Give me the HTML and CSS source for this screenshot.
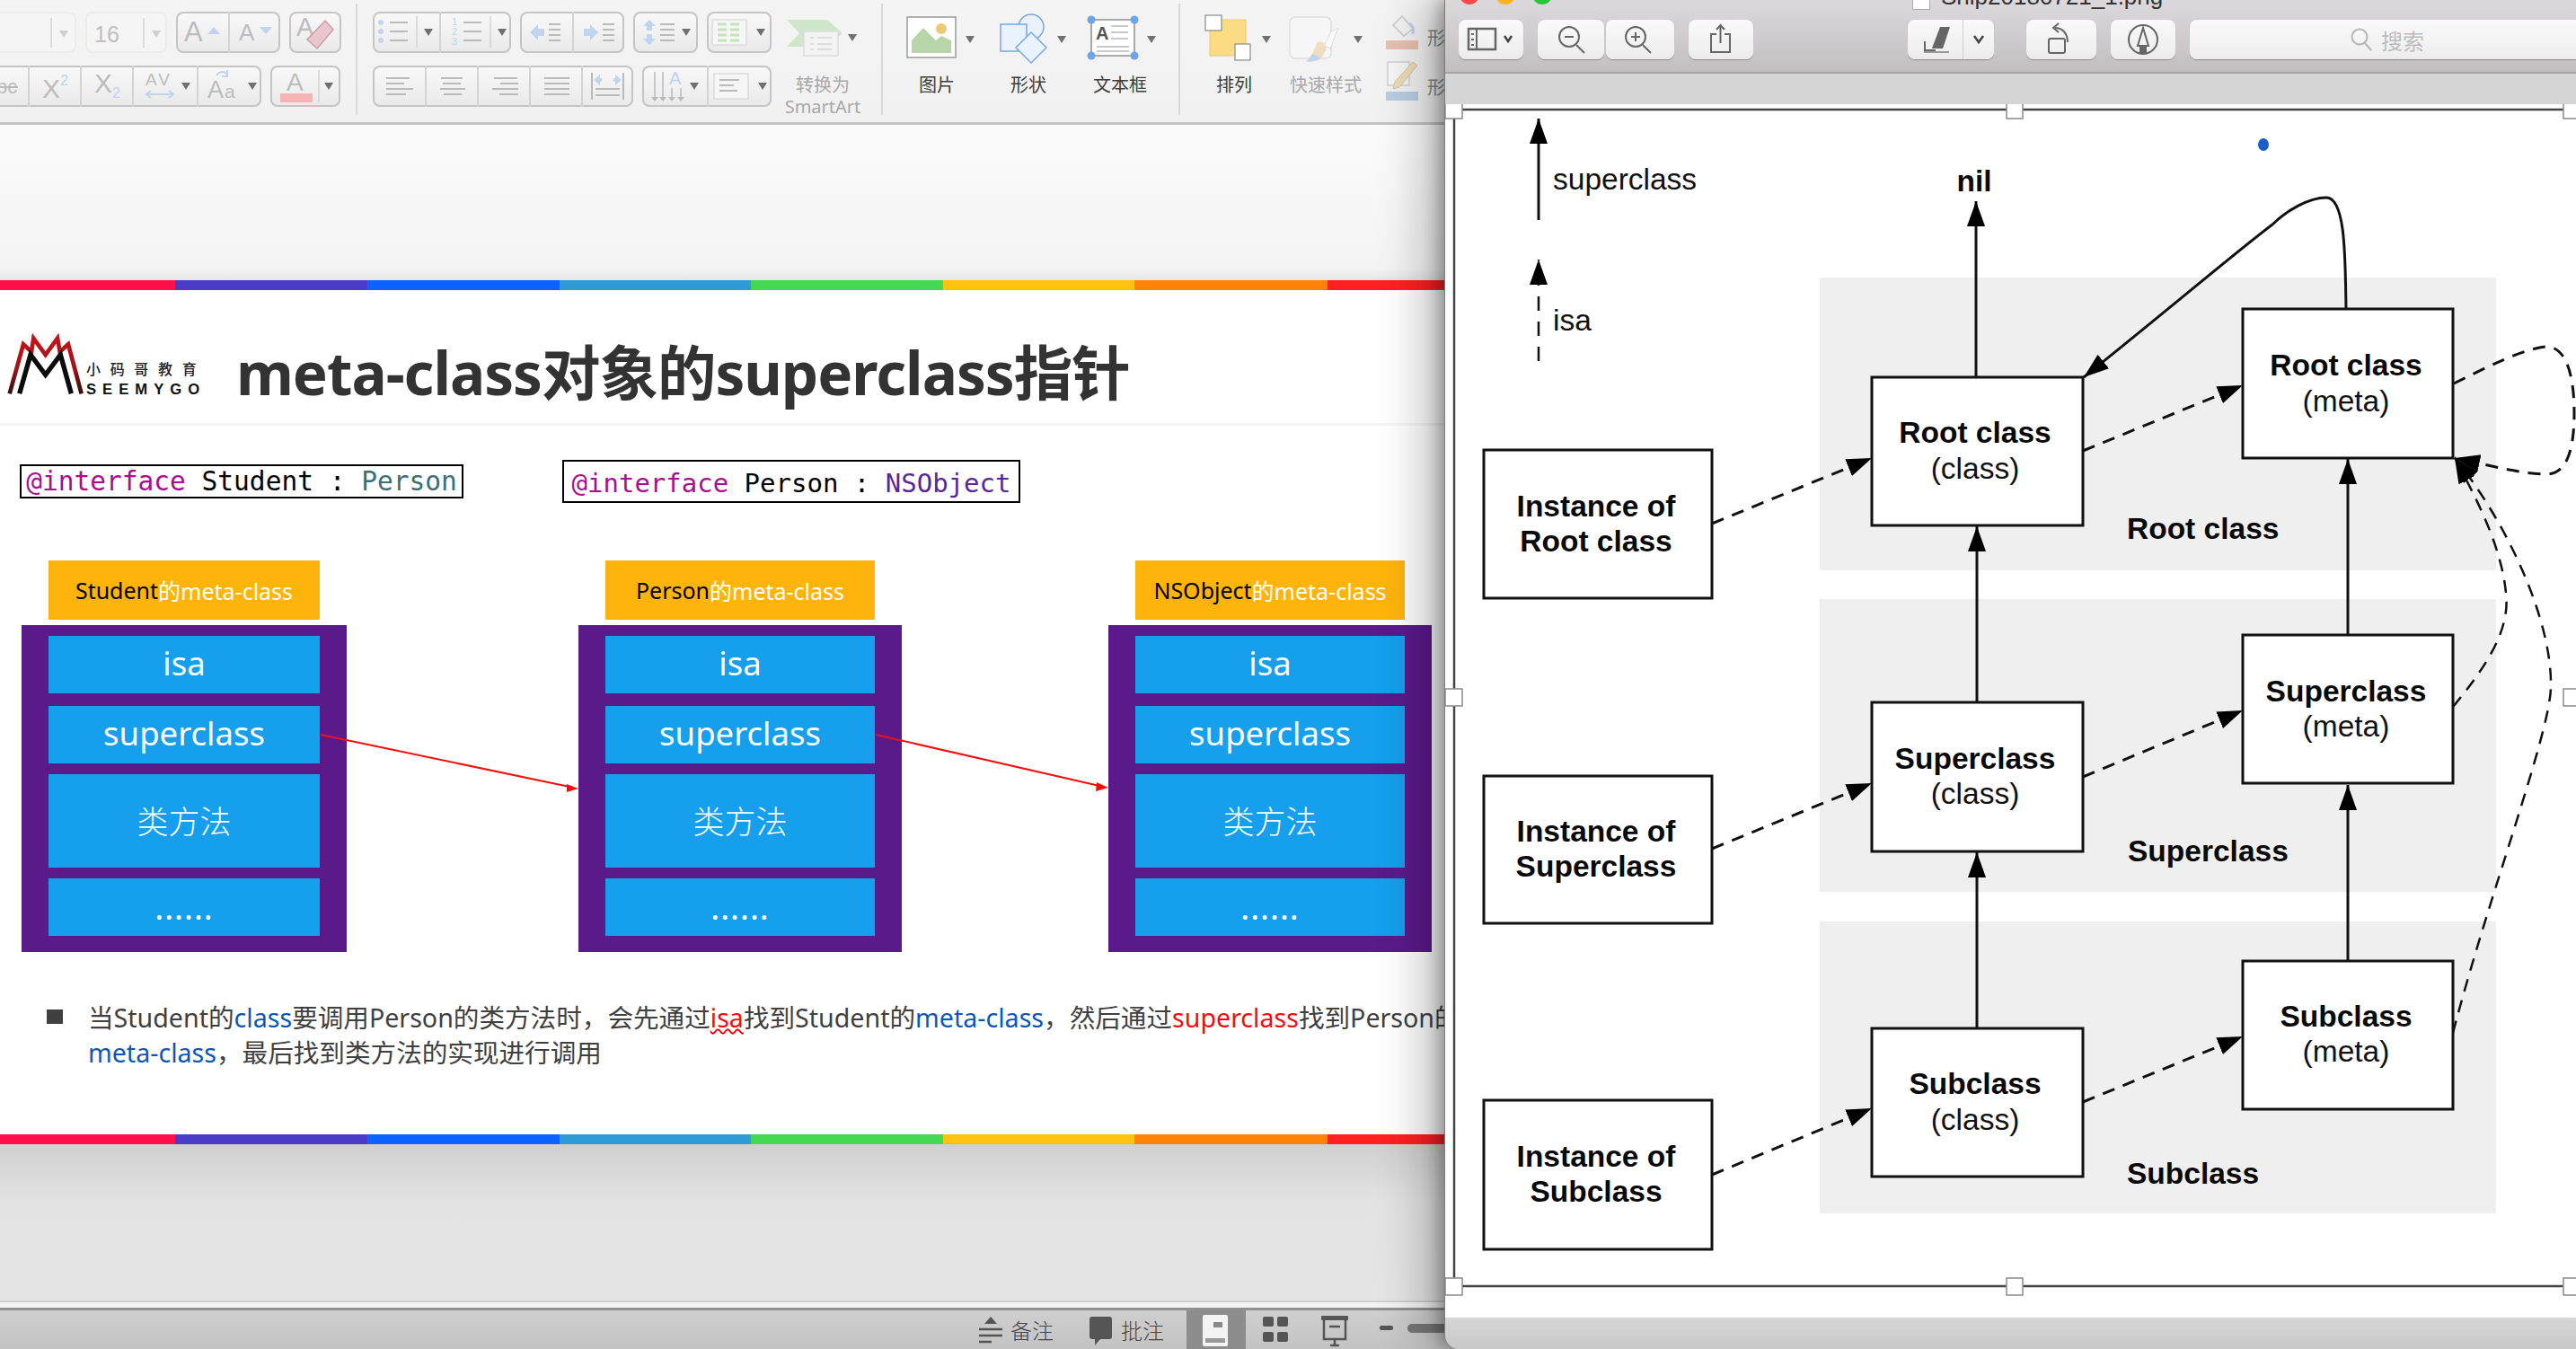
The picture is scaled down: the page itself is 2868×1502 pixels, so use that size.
FILE: index.html
```html
<!DOCTYPE html>
<html lang="zh">
<head>
<meta charset="utf-8">
<title>meta-class</title>
<link rel="stylesheet" href="styles.css">
</head>
<body>
<div class="desktop">
  <main class="ppt">
    <header class="ribbon">
      <section class="rsec font-sec">
        <div class="rrow">
          <div class="combo w85"><svg><line class="sep" x1="57" y1="5" x2="57" y2="38"/><path class="tri-light" d="M66 19h10l-5 8z"/></svg></div>
          <div class="combo w91"><svg><text class="t16" x="8" y="32">16</text><line class="sep" x1="63" y1="5" x2="63" y2="38"/><path class="tri-light" d="M72 19h10l-5 8z"/></svg></div>
          <div class="grp">
            <div class="cell w58"><svg><text class="ga" x="9" y="33" font-size="31">A</text><path class="blue" d="M35 25h14l-7-8z"/></svg></div>
            <div class="cell w58"><svg><text class="ga" x="10" y="32" font-size="26">A</text><path class="blue" d="M33 17h14l-7 8z"/></svg></div>
          </div>
          <div class="grp"><div class="cell w58"><svg><text class="ga" x="8" y="27" font-size="29">A</text><path d="M40 10l9 10-18 21-11-10z" fill="#e9c5cd" stroke="#cd9fab" stroke-width="1.5"/></svg></div></div>
        </div>
        <div class="rrow">
          <div class="grp cutleft">
            <div class="cell w31"><svg><text class="ga" x="-2" y="31" font-size="22">bc</text><line class="ln" x1="0" y1="24" x2="22" y2="24"/></svg></div>
            <div class="cell w58"><svg><text class="ga" x="14" y="36" font-size="30">X</text><text class="bluet" x="34" y="22" font-size="16">2</text></svg></div>
            <div class="cell w58"><svg><text class="ga" x="14" y="30" font-size="30">X</text><text class="bluet" x="34" y="36" font-size="16">2</text></svg></div>
            <div class="cell w72"><svg><text class="ga" x="13" y="22" font-size="19" letter-spacing="3">AV</text><path class="blue-l" d="M14 32h30M19 28l-5 4 5 4M39 28l5 4-5 4"/><path class="tri" d="M53 19h10l-5 8z"/></svg></div>
            <div class="cell w72"><svg><text class="ga" x="10" y="36" font-size="27">A</text><text class="ga" x="29" y="36" font-size="21">a</text><path class="blue-l" d="M20 11c3-5 9-5 12-1M32 5v7h-6"/><path class="tri" d="M55 19h10l-5 8z"/></svg></div>
          </div>
          <div class="grp"><div class="cell w78"><svg><text class="ga" x="18" y="28" font-size="28">A</text><rect x="11" y="31" width="36" height="10" rx="1" fill="#f5b3b3"/><line class="sep" x1="54" y1="5" x2="54" y2="41"/><path class="tri" d="M60 19h10l-5 8z"/></svg></div></div>
        </div>
      </section>
      <div class="rdiv"></div>
      <section class="rsec para-sec">
        <div class="rrow">
          <div class="grp">
            <div class="cell w74"><svg><circle class="dot" cx="9" cy="12" r="3"/><circle class="dot" cx="9" cy="22" r="3"/><circle class="dot" cx="9" cy="32" r="3"/><path class="ln" d="M19 12h20M19 22h20M19 32h20"/><line class="sep" x1="49" y1="5" x2="49" y2="40"/><path class="tri" d="M57 19h10l-5 8z"/></svg></div>
            <div class="cell w80"><svg><text class="bluet" x="12" y="15" font-size="11">1</text><text class="bluet" x="12" y="26" font-size="11">2</text><text class="bluet" x="12" y="37" font-size="11">3</text><path class="ln" d="M25 12h20M25 22h20M25 32h20"/><line class="sep" x1="55" y1="5" x2="55" y2="40"/><path class="tri" d="M63 19h10l-5 8z"/></svg></div>
          </div>
          <div class="grp">
            <div class="cell w58"><svg><path class="blue" d="M11 23l9-9v5h7v8h-7v5z"/><path class="ln" d="M32 14h13M32 20h13M32 26h13M32 32h13"/></svg></div>
            <div class="cell w58"><svg><path class="blue" d="M27 23l-9-9v5h-7v8h7v5z"/><path class="ln" d="M32 14h13M32 20h13M32 26h13M32 32h13"/></svg></div>
          </div>
          <div class="grp"><div class="cell w72"><svg><path class="blue" d="M18 9l7 7h-4v5h-6v-5h-4zM18 37l7-7h-4v-5h-6v5h-4z"/><path class="ln" d="M30 14h16M30 20h16M30 26h16M30 32h16"/><path class="tri" d="M54 19h10l-5 8z"/></svg></div></div>
          <div class="grp"><div class="cell w72"><svg><rect x="6" y="9" width="38" height="28" fill="#f6f6f6" stroke="#cfcfcf"/><path d="M12 14h10M26 14h10M12 20h10M26 20h10M12 26h10M26 26h10M12 32h10M26 32h10" stroke="#c5e3bd" stroke-width="3"/><path class="tri" d="M55 19h10l-5 8z"/></svg></div></div>
        </div>
        <div class="rrow">
          <div class="grp">
            <div class="cell w58"><svg><path class="ln" d="M15 14h26M15 20h20M15 26h30M15 32h22"/></svg></div>
            <div class="cell w58"><svg><path class="ln" d="M16 14h24M18 20h20M15 26h28M19 32h20"/></svg></div>
            <div class="cell w58"><svg><path class="ln" d="M17 14h26M24 20h20M15 26h29M23 32h21"/></svg></div>
            <div class="cell w58"><svg><path class="ln" d="M15 14h28M15 20h28M15 26h28M15 32h28"/></svg></div>
            <div class="cell w58"><svg><path class="ln" d="M10 8v30M45 8v30M14 26h27M14 33h27"/><path class="blue" d="M12 16l7-6v4h2v4h-2v4zM43 16l-7-6v4h-2v4h2v4z"/></svg></div>
          </div>
          <div class="grp">
            <div class="cell w72"><svg><path class="ln thin" d="M14 7v30M23 7v30M33 25v12M43 25v12"/><path class="ln-tri" d="M10 35h8l-4 5zM19 35h8l-4 5zM29 35h8l-4 5zM39 35h8l-4 5z"/><text class="bluet" x="30" y="21" font-size="20">A</text><path class="tri" d="M53 19h10l-5 8z"/></svg></div>
            <div class="cell w72"><svg><rect x="6" y="9" width="38" height="28" fill="#f6f6f6" stroke="#cfcfcf"/><path class="ln" d="M12 16h22M12 22h16M12 28h20"/><path class="tri" d="M55 19h10l-5 8z"/></svg></div>
          </div>
        </div>
      </section>
      <div class="big smart">
        <svg class="bigico"><path d="M10 18h45l17 15-17 15H10l14-15z" fill="#cfe6cb"/><rect x="29" y="31" width="38" height="27" fill="#f3f3f3" stroke="#ddd" stroke-width="1.5"/><path d="M36 38h4M44 38h16M36 45h4M44 45h16M36 51h4M44 51h16" stroke="#dcdcdc" stroke-width="2"/><path class="tri" d="M78 34h10l-5 8z"/></svg>
        <span class="blabel off">转换为</span>
        <span class="blabel off">SmartArt</span>
      </div>
      <div class="rdiv"></div>
      <div class="big">
        <svg class="bigico"><rect x="17" y="15" width="54" height="45" fill="#fff" stroke="#9a9a9a" stroke-width="1.5"/><path d="M22 55V41l13-14 14 14 6-5 11 5v14z" fill="#b8d4a9"/><ellipse cx="55" cy="28" rx="6" ry="6" fill="#edc973"/><path class="tri" d="M82 36h10l-5 8z"/></svg>
        <span class="blabel">图片</span>
      </div>
      <div class="big">
        <svg class="bigico"><circle cx="53" cy="26" r="14" fill="#e9f2fd" stroke="#7aa7e6" stroke-width="1.5"/><rect x="19" y="23" width="29" height="30" fill="#e9f2fd" stroke="#7aa7e6" stroke-width="1.5"/><path d="M53 32l17 17-17 17-17-17z" fill="#eaf3fd" stroke="#7aa7e6" stroke-width="1.5"/><path class="tri" d="M82 36h10l-5 8z"/></svg>
        <span class="blabel">形状</span>
      </div>
      <div class="big">
        <svg class="bigico"><rect x="18" y="18" width="48" height="40" fill="#fff" stroke="#8f8f8f" stroke-width="1.5"/><circle class="hnd" cx="18" cy="18" r="4.5"/><circle class="hnd" cx="66" cy="18" r="4.5"/><circle class="hnd" cx="18" cy="58" r="4.5"/><circle class="hnd" cx="66" cy="58" r="4.5"/><text class="tba" x="23" y="40" font-size="20">A</text><path d="M40 25h19M40 32h19M40 39h19M24 48h36M24 53h36" stroke="#c9c9c9" stroke-width="2"/><path class="tri" d="M80 36h10l-5 8z"/></svg>
        <span class="blabel">文本框</span>
      </div>
      <div class="rdiv"></div>
      <div class="big">
        <svg class="bigico"><rect x="23" y="18" width="40" height="40" fill="#fbdc84" stroke="#e8c96c"/><rect x="18" y="13" width="18" height="17" fill="#fff" stroke="#8a8a8a" stroke-width="1.2"/><rect x="51" y="45" width="17" height="18" fill="#fff" stroke="#8a8a8a" stroke-width="1.2"/><path class="tri" d="M81 36h10l-5 8z"/></svg>
        <span class="blabel">排列</span>
      </div>
      <div class="big">
        <svg class="bigico"><rect x="10" y="15" width="46" height="46" rx="6" fill="#f6f6f6" stroke="#dedede" stroke-width="1.5"/><path d="M56 31l8-4-9 23-7-3z" fill="#fafafa" stroke="#dcdcdc"/><path d="M40 44c5-4 12 0 10 8l-5 9c-5 3-13 4-17 3 5-3 10-12 12-20z" fill="#f0dcc2"/><path d="M45 61c-5 3-13 4-17 3 2-1 5-4 7-8z" fill="#bcd3f0"/><path class="tri" d="M81 36h10l-5 8z"/></svg>
        <span class="blabel off">快速样式</span>
      </div>
      <div class="stylecol">
        <div class="stylerow">
          <svg class="styleico"><path d="M8 16l10-10 12 14-10 8z" fill="#f3f3f3" stroke="#c8c8c8" stroke-width="1.5"/><path d="M26 14c4 2 5 7 4 12" fill="none" stroke="#bfd2ec" stroke-width="3"/><rect x="0" y="33" width="36" height="10" fill="#e8c1b0"/></svg>
          <span class="stext">形</span>
        </div>
        <div class="stylerow">
          <svg class="styleico"><rect x="2" y="2" width="24" height="26" fill="#f6f6f6" stroke="#d0d0d0" stroke-width="1.5"/><path d="M30 2l5 4-20 24-7 2 2-8z" fill="#ecdcb8" stroke="#d4c49d"/><rect x="0" y="35" width="36" height="10" fill="#b9cde3"/></svg>
          <span class="stext">形</span>
        </div>
      </div>
    </header>

    <div class="workspace">
      <div class="slide">
        <div class="rainbow">
          <i class="s1"></i><i class="s2"></i><i class="s3"></i><i class="s4"></i><i class="s5"></i><i class="s6"></i><i class="s7"></i><i class="s8"></i>
        </div>
        <div class="slide-head">
          <svg class="logo" viewBox="0 0 780 300">
            <defs><linearGradient id="redfade" x1="0" y1="0" x2="0" y2="1"><stop offset="0" stop-color="#c4131a"/><stop offset=".55" stop-color="#a01216"/><stop offset="1" stop-color="#301010"/></linearGradient></defs>
            <polyline points="32,235 78,70 105,95 112,50 152,105 192,50 200,95 228,70 272,235" fill="none" stroke="url(#redfade)" stroke-width="14"/>
            <polyline points="65,235 102,105 152,172 202,105 238,235" fill="none" stroke="#0c0c0c" stroke-width="16"/>
            <text class="logo-cn" x="288" y="170">小码哥教育</text>
            <text class="logo-en" x="288" y="237">SEEMYGO</text>
          </svg>
          <h1 class="slide-title">meta-class对象的superclass指针</h1>
        </div>
        <div class="code-row">
          <div class="code c1"><span class="kw">@interface</span> Student : <span class="ty1">Person</span></div>
          <div class="code c2"><span class="kw">@interface</span> Person : <span class="ty2">NSObject</span></div>
        </div>
        <div class="cols">
          <div class="col">
            <div class="col-head">Student<span class="wh">的meta-class</span></div>
            <div class="stack"><div class="row">isa</div><div class="row">superclass</div><div class="row tall cn">类方法</div><div class="row dots">......</div></div>
          </div>
          <div class="col narrow gap-b">
            <div class="col-head">Person<span class="wh">的meta-class</span></div>
            <div class="stack"><div class="row">isa</div><div class="row">superclass</div><div class="row tall cn">类方法</div><div class="row dots">......</div></div>
          </div>
          <div class="col narrow gap-c">
            <div class="col-head">NSObject<span class="wh">的meta-class</span></div>
            <div class="stack"><div class="row">isa</div><div class="row">superclass</div><div class="row tall cn">类方法</div><div class="row dots">......</div></div>
          </div>
        </div>
        <div class="note">
          <span class="sq"></span>
          <p>当Student的<span class="b">class</span>要调用Person的类方法时，会先通过<span class="r sq-under">isa</span>找到Student的<span class="b">meta-class</span>，然后通过<span class="r">superclass</span>找到Person的<br><span class="b">meta-class</span>，最后找到类方法的实现进行调用</p>
        </div>
        <div class="rainbow bottom">
          <i class="s1"></i><i class="s2"></i><i class="s3"></i><i class="s4"></i><i class="s5"></i><i class="s6"></i><i class="s7"></i><i class="s8"></i>
        </div>
        <svg class="slide-arrows" viewBox="0 312 1608 962">
          <path d="M357 818L634 876M975 818L1224 875" stroke="#f40f0f" stroke-width="2" fill="none"/>
          <path d="M644 878l-13-5v9zM1234 877l-13-6-1 10z" fill="#f40f0f"/>
        </svg>
      </div>
      <div class="hsplit"></div>
    </div>

    <footer class="status">
      <span class="st-item">
        <svg class="st-ico"><path d="M14 2l7 8H7z" fill="#555"/><path d="M1 16h26M1 23h26M1 30h14" stroke="#555" stroke-width="2.5"/></svg>备注
      </span>
      <span class="st-item">
        <svg class="st-ico"><path d="M4 2h19a3 3 0 0 1 3 3v19a3 3 0 0 1-3 3H13l-6 7v-7H4a3 3 0 0 1-3-3V5a3 3 0 0 1 3-3z" fill="#555"/></svg>批注
      </span>
      <span class="st-view on"><svg class="v-ico"><rect x="0" y="1" width="28" height="35" rx="2" fill="#f4f4f4"/><rect x="12" y="9" width="10" height="6" fill="#888"/><rect x="3" y="27" width="22" height="5" fill="#999"/></svg></span>
      <span class="st-view"><svg class="v-ico"><rect x="1" y="3" width="12" height="11" rx="2" fill="#555"/><rect x="17" y="3" width="12" height="11" rx="2" fill="#555"/><rect x="1" y="20" width="12" height="11" rx="2" fill="#555"/><rect x="17" y="20" width="12" height="11" rx="2" fill="#555"/></svg></span>
      <span class="st-view"><svg class="v-ico"><rect x="0" y="2" width="30" height="5" rx="1" fill="#555"/><rect x="3" y="5" width="24" height="23" fill="none" stroke="#555" stroke-width="2.5"/><path d="M9 14h12M15 28v6M10 35h10" stroke="#555" stroke-width="2.5"/></svg></span>
      <span class="st-minus"></span>
      <span class="st-slider"></span>
    </footer>
  </main>

  <aside class="preview">
    <div class="pv-bar">
      <div class="pv-btn w72"><svg><rect x="11" y="10" width="30" height="23" fill="none" stroke="#666" stroke-width="2.5"/><path d="M20 10v23" stroke="#666" stroke-width="2"/><path d="M14 16h3M14 22h3M14 28h3" stroke="#666" stroke-width="2"/><path d="M51 18l4 6 4-6" fill="none" stroke="#444" stroke-width="2.5"/></svg></div>
      <div class="pv-btn w74 g16"><svg><circle cx="35" cy="19" r="11" fill="none" stroke="#666" stroke-width="2"/><path d="M30 19h10M43 28l9 9" stroke="#666" stroke-width="2"/></svg></div>
      <div class="pv-btn w76 g2"><svg><circle cx="33" cy="19" r="11" fill="none" stroke="#666" stroke-width="2"/><path d="M28 19h10M33 14v10M41 28l9 9" stroke="#666" stroke-width="2"/></svg></div>
      <div class="pv-btn w72 g16"><svg><path d="M31 16h-6v20h21V16h-6M35.500 26V7M31 11l4.500-5 4.500 5" fill="none" stroke="#666" stroke-width="2"/></svg></div>
      <div class="pv-split g172">
        <div class="pv-btn inner w61"><svg><path d="M28 29l8-21h11l-8 24H27z" fill="#666"/><path d="M18 36h28" stroke="#999" stroke-width="2"/><path d="M19 24v10h12" fill="none" stroke="#666" stroke-width="2"/></svg></div>
        <div class="pv-btn inner w35"><svg><path d="M12 18l5 7 5-7" fill="none" stroke="#444" stroke-width="2.5"/></svg></div>
      </div>
      <div class="pv-btn w78 g36"><svg><rect x="25" y="21" width="18" height="16" rx="2" fill="none" stroke="#666" stroke-width="2"/><path d="M32 9c8 0 14 6 14 16M36 4l-6 5 6 5" fill="none" stroke="#666" stroke-width="2"/></svg></div>
      <div class="pv-btn w72 g16"><svg><circle cx="36" cy="22" r="16" fill="none" stroke="#666" stroke-width="2"/><path d="M36 9l-6 20h12z" fill="none" stroke="#666" stroke-width="2"/><rect x="32" y="28" width="8" height="9" fill="#666"/></svg></div>
      <div class="pv-search g16">
        <svg class="lens"><circle cx="10" cy="10" r="8.500" fill="none" stroke="#b5b5b5" stroke-width="2"/><path d="M16 17l7 8" stroke="#b5b5b5" stroke-width="2"/></svg>
        <span>搜索</span>
      </div>
    </div>
    <div class="pv-title"><span class="pv-fileicon"></span>Snip20180721_1.png</div>
    <span class="light red"></span><span class="light amber"></span><span class="light green"></span>
    <div class="pv-band"></div>
    <div class="pv-canvas">
      <svg class="diagram" viewBox="1609 116 1260 1351">
        <defs>
          <marker id="ah" markerUnits="userSpaceOnUse" markerWidth="30" markerHeight="22" refX="28" refY="10" orient="auto"><path d="M0 0L28 10 0 20z"/></marker>
        </defs>
        <rect class="band" x="2026" y="309" width="753" height="326"/>
        <rect class="band" x="2026" y="667" width="753" height="326"/>
        <rect class="band" x="2026" y="1026" width="753" height="325"/>

        <rect class="frame" x="1619" y="122" width="1300" height="1310"/>

        <path class="solid" d="M1713 245V132" marker-end="url(#ah)"/>
        <path class="dash legend" d="M1713 402V289" marker-end="url(#ah)"/>
        <text class="rg" x="1729" y="211">superclass</text>
        <text class="rg" x="1729" y="368">isa</text>
        <text class="bd mid" x="2198" y="213">nil</text>
        <ellipse cx="2520" cy="161" rx="6" ry="7" fill="#1a5fc8"/>

        <path class="solid" d="M2200 420V224" marker-end="url(#ah)"/>
        <path class="solid" d="M2201 782V586" marker-end="url(#ah)"/>
        <path class="solid" d="M2201 1145V949" marker-end="url(#ah)"/>
        <path class="solid" d="M2614 707V511" marker-end="url(#ah)"/>
        <path class="solid" d="M2614 1070V874" marker-end="url(#ah)"/>
        <path class="solid" d="M2612 344C2611 290 2612 220 2590 220C2570 220 2545 235 2530 250C2490 280 2420 340 2320 420" marker-end="url(#ah)"/>

        <path class="dash" d="M1906 583L2084 510" marker-end="url(#ah)"/>
        <path class="dash" d="M2319 502L2497 429" marker-end="url(#ah)"/>
        <path class="dash" d="M1906 945L2084 872" marker-end="url(#ah)"/>
        <path class="dash" d="M2319 865L2497 791" marker-end="url(#ah)"/>
        <path class="dash" d="M1906 1308L2084 1234" marker-end="url(#ah)"/>
        <path class="dash" d="M2319 1227L2497 1154" marker-end="url(#ah)"/>
        <path class="dash" d="M2732 427C2770 408 2810 388 2835 386C2858 386 2866 420 2866 460C2866 500 2858 528 2835 528C2810 528 2770 518 2733 510" marker-end="url(#ah)"/>
        <path class="dash thin" d="M2731 787C2770 740 2795 700 2790 660C2785 610 2760 560 2733 510" marker-end="url(#ah)"/>
        <path class="dash thin" d="M2731 1150C2770 1000 2838 820 2840 766C2842 690 2790 580 2733 510" marker-end="url(#ah)"/>

        <rect class="box" x="1652" y="501" width="254" height="165"/>
        <rect class="box" x="2084" y="420" width="235" height="165"/>
        <rect class="box" x="2497" y="344" width="234" height="166"/>
        <rect class="box" x="1652" y="864" width="254" height="164"/>
        <rect class="box" x="2084" y="782" width="235" height="166"/>
        <rect class="box" x="2497" y="707" width="234" height="165"/>
        <rect class="box" x="1652" y="1225" width="254" height="166"/>
        <rect class="box" x="2084" y="1145" width="235" height="165"/>
        <rect class="box" x="2497" y="1070" width="234" height="165"/>

        <text class="bd mid" x="1777" y="575">Instance of</text><text class="bd mid" x="1777" y="614">Root class</text>
        <text class="bd mid" x="2199" y="493">Root class</text><text class="rg mid" x="2199" y="533">(class)</text>
        <text class="bd mid" x="2612" y="418">Root class</text><text class="rg mid" x="2612" y="458">(meta)</text>
        <text class="bd" x="2368" y="600">Root class</text>

        <text class="bd mid" x="1777" y="937">Instance of</text><text class="bd mid" x="1777" y="976">Superclass</text>
        <text class="bd mid" x="2199" y="856">Superclass</text><text class="rg mid" x="2199" y="895">(class)</text>
        <text class="bd mid" x="2612" y="781">Superclass</text><text class="rg mid" x="2612" y="820">(meta)</text>
        <text class="bd" x="2369" y="959">Superclass</text>

        <text class="bd mid" x="1777" y="1299">Instance of</text><text class="bd mid" x="1777" y="1338">Subclass</text>
        <text class="bd mid" x="2199" y="1218">Subclass</text><text class="rg mid" x="2199" y="1258">(class)</text>
        <text class="bd mid" x="2612" y="1143">Subclass</text><text class="rg mid" x="2612" y="1182">(meta)</text>
        <text class="bd" x="2368" y="1318">Subclass</text>

        <rect class="handle" x="1609" y="112" width="19" height="20"/>
        <rect class="handle" x="2234" y="112" width="18" height="20"/>
        <rect class="handle" x="2854" y="112" width="19" height="20"/>
        <rect class="handle" x="1609" y="767" width="19" height="19"/>
        <rect class="handle" x="2854" y="767" width="19" height="19"/>
        <rect class="handle" x="1609" y="1423" width="19" height="19"/>
        <rect class="handle" x="2234" y="1423" width="18" height="19"/>
        <rect class="handle" x="2854" y="1423" width="19" height="19"/>
      </svg>
    </div>
    <div class="pv-foot"></div>
  </aside>
</div>
</body>
</html>
```
FILE: styles.css
```css
* { box-sizing: border-box; }
html, body { margin: 0; padding: 0; }
body { width: 2868px; height: 1502px; overflow: hidden; background: #ddd; font-family: "Noto Sans", "Noto Sans CJK SC", sans-serif; }
.desktop { position: relative; width: 2868px; height: 1502px; overflow: hidden; }

/* PowerPoint window */
.ppt { width: 1620px; height: 1502px; display: flex; flex-direction: column; }
.ribbon { height: 139px; flex: none; display: flex; align-items: flex-start; background: linear-gradient(#f4f4f4, #f1f1f1); border-bottom: 3px solid #c4c4c4; }
.rsec { display: flex; flex-direction: column; gap: 14px; padding-top: 13px; }
.font-sec { width: 379px; }
.para-sec { width: 444px; }
.rrow { display: flex; gap: 10px; height: 46px; }
.rdiv { width: 2px; height: 124px; margin: 4px 15px 0; background: #d9d9d9; flex: none; }
.font-sec + .rdiv { margin: 4px 17px 0 17px; }
.combo { height: 46px; border: 2px solid #ececec; border-radius: 8px; background: #f5f5f5; flex: none; }
.combo.w85 { border-left: 0; border-radius: 0 8px 8px 0; width: 85px; }
.combo.w91 { width: 91px; }
.combo svg, .cell svg, .pv-btn svg { display: block; width: 100%; height: 100%; overflow: visible; }
.grp { height: 46px; display: flex; border-radius: 8px; background: linear-gradient(#f9f9f9, #e9e9e9); box-shadow: inset 0 0 0 2px #c5c5c5; flex: none; }
.grp.cutleft { margin-left: -2px; border-radius: 0 8px 8px 0; }
.cell { height: 100%; flex: none; border-left: 2px solid #d3d3d3; overflow: hidden; }
.cell:first-child { border-left: 0; }
.w31 { width: 33px; } .w58 { width: 58px; } .w72 { width: 72px; } .w74 { width: 74px; } .w76 { width: 76px; } .w78 { width: 78px; } .w80 { width: 80px; }
.w35 { width: 35px; } .w61 { width: 61px; }
.ga { fill: #bcbcbc; font-family: "Liberation Sans", sans-serif; }
.bluet { fill: #c0d3ec; font-family: "Liberation Sans", sans-serif; }
.t16 { fill: #bfbfbf; font-family: "Liberation Sans", sans-serif; font-size: 25px; }
.tba { fill: #555; font-family: "Liberation Sans", sans-serif; font-weight: 700; }
.blue { fill: #c0d4ee; }
.blue-l { fill: none; stroke: #c0d4ee; stroke-width: 2; }
.dot { fill: #c3d5ed; }
.hnd { fill: #6fa3ea; }
.ln { fill: none; stroke: #bababa; stroke-width: 2; }
.ln.thin { stroke-width: 1.5; }
.ln-tri { fill: #bababa; }
.sep { stroke: #d3d3d3; stroke-width: 1.5; }
.tri { fill: #707070; }
.tri-light { fill: #cfcfcf; }
.big { width: 100px; flex: none; display: flex; flex-direction: column; align-items: center; padding-top: 4px; }
.bigico { width: 100px; height: 79px; display: block; overflow: visible; flex: none; }
.smart { margin: 0 0 0 7px; }
.rdiv + .big { margin-left: -5px; }
.big + .big { margin-left: 2px; }
.blabel { font-size: 20px; line-height: 24px; color: #3e3e3e; white-space: nowrap; }
.blabel.off { color: #a8a8a8; }
.stylecol { display: flex; flex-direction: column; gap: 5px; padding: 8px 0 0 17px; }
.stylerow { display: flex; gap: 10px; height: 50px; align-items: flex-end; }
.styleico { width: 36px; height: 46px; display: block; flex: none; }
.stext { font-size: 20px; color: #888; line-height: 30px; }

.workspace { flex: 1; display: flex; flex-direction: column; padding-top: 173px; background: linear-gradient(#fbfbfb 0, #f4f4f4 160px, #e6e6e6 173px, #d0d0d0 1135px, #e3e3e3 1200px, #e5e5e5 100%); min-height: 0; }
.slide { position: relative; height: 962px; flex: none; display: flex; flex-direction: column; background: #fff; overflow: hidden; }
.rainbow { height: 11px; flex: none; display: flex; }
.rainbow i { display: block; height: 100%; flex: none; width: 214px; }
.rainbow .s1 { width: 195px; background: #ff1049; }
.rainbow .s2 { background: #4a3bc9; }
.rainbow .s3 { background: #0c62ff; }
.rainbow .s4 { background: #2f9bd6; width: 213px; }
.rainbow .s5 { background: #45d853; }
.rainbow .s6 { background: #ffc20e; width: 213px; }
.rainbow .s7 { background: #ff8209; width: 215px; }
.rainbow .s8 { background: #ff2020; width: 143px; }
.rainbow.bottom { margin-top: auto; }
.slide-head { height: 151px; flex: none; display: flex; align-items: flex-start; padding-top: 37px; border-bottom: 3px solid #f6f6f6; }
.logo { width: 260px; height: 100px; flex: none; display: block; }
.logo-cn { font-family: "Noto Sans CJK SC", sans-serif; font-size: 48px; font-weight: 500; letter-spacing: 32px; fill: #222; }
.logo-en { font-family: "Liberation Sans", sans-serif; font-weight: 700; font-size: 50px; letter-spacing: 21px; fill: #111; }
.slide-title { margin: 8px 0 0 3px; font-size: 65.5px; line-height: 94px; font-weight: 700; color: #333; white-space: nowrap; letter-spacing: -1px; }
.code-row { display: flex; align-items: center; gap: 110px; margin-top: 38px; padding-left: 22px; height: 48px; flex: none; }
.code { border: 2px solid #000; font-family: "DejaVu Sans Mono", monospace; color: #000; white-space: nowrap; display: block; text-align: center; font-size: 29.5px; }
.code.c1 { width: 494px; height: 38px; line-height: 34px; }
.code.c2 { width: 510px; height: 48px; line-height: 48px; font-size: 29px; }
.kw { color: #aa0d91; }
.ty1 { color: #3f6e74; }
.ty2 { color: #5c2699; }
.cols { display: flex; margin: 64px 0 0 24px; flex: none; }
.col { width: 362px; display: flex; flex-direction: column; gap: 6px; flex: none; }
.col.narrow { width: 360px; }
.gap-b { margin-left: 258px; }
.gap-c { margin-left: 230px; }
.col-head { height: 66px; margin: 0 30px; background: #ffb40b; color: #000; display: flex; align-items: center; justify-content: center; font-size: 25px; white-space: pre; }
.wh { color: #fff; }
.stack { background: #5a1a8a; padding: 12px 30px 18px; display: flex; flex-direction: column; gap: 12px; }
.row { height: 64px; background: #159fec; color: #fff; display: flex; align-items: center; justify-content: center; font-size: 36.500px; line-height: 60px; padding-bottom: 4px; flex: none; }
.row:nth-child(2) { margin-top: 2px; }
.row.tall { height: 104px; font-size: 35px; line-height: 1.4; }
.row.cn { font-family: "Noto Sans CJK SC", sans-serif; font-weight: 300; }
.row.dots { font-size: 37px; letter-spacing: 1px; align-items: flex-end; line-height: 37px; padding-bottom: 14px; }
.note { display: flex; align-items: flex-start; padding-left: 52px; margin-top: 53px; flex: none; }
.sq { width: 18px; height: 16px; margin-top: 11px; background: #404040; flex: none; }
.note p { margin: 0 0 0 28px; font-size: 28.600px; line-height: 39px; color: #404040; white-space: nowrap; }
.b { color: #0b57b8; }
.r { color: #f50d0d; }
.sq-under { text-decoration: #e00 wavy underline 2px; }
.slide-arrows { position: absolute; left: 0; top: 0; width: 1608px; height: 962px; pointer-events: none; }
.hsplit { margin-top: auto; height: 11px; flex: none; background: #f3f3f3; border-top: 2px solid #cfcfcf; border-bottom: 3px solid #909090; }

.status { height: 43px; flex: none; display: flex; align-items: stretch; padding-left: 1089px; background: linear-gradient(#cfcfcf, #c3c3c3); color: #444; font-size: 24px; }
.st-item { display: flex; align-items: center; gap: 9px; margin-right: 39px; font-family: "Noto Sans CJK SC", sans-serif; font-weight: 300; line-height: 1; white-space: nowrap; }
.st-item + .st-item { margin-right: 25px; }
.st-ico { width: 27px; height: 34px; display: block; flex: none; overflow: visible; }
.st-view { width: 74px; display: flex; align-items: center; justify-content: center; }
.st-view.on { background: #8d8d8d; }
.v-ico { width: 30px; height: 36px; display: block; overflow: visible; }
.st-minus { width: 16px; height: 5px; margin: 17px 16px 0 18px; background: #555; border-radius: 2px; }
.st-slider { width: 60px; height: 10px; margin-top: 15px; background: #777; border-radius: 5px; }

/* Preview window: a window lying over the other one */
.preview { position: absolute; left: 1608px; top: 0; width: 1260px; height: 1502px; display: flex; flex-direction: column; border-left: 1px solid #7d7d7d; border-radius: 0 0 0 16px; background: #d0d0d0; box-shadow: -6px 0 18px rgba(0,0,0,.3), -26px 0 50px rgba(0,0,0,.22); overflow: visible; }
.pv-bar { height: 82px; flex: none; display: flex; align-items: flex-start; padding: 22px 0 0 15px; background: linear-gradient(#dcd9dc, #c1bfc0); border-bottom: 2px solid #a5a5a5; overflow: hidden; }
.pv-btn { height: 44px; flex: none; border-radius: 8px; background: linear-gradient(#fafafa, #ececec); box-shadow: 0 1px 1px #8a8a8a, 0 0 0 1px #d0d0d0; }
.pv-btn.inner { border-radius: 0; box-shadow: none; background: none; }
.g2 { margin-left: 2px; } .g16 { margin-left: 16px; } .g36 { margin-left: 36px; } .g172 { margin-left: 172px; }
.pv-split { height: 44px; flex: none; display: flex; border-radius: 8px; background: linear-gradient(#fafafa, #ececec); box-shadow: 0 1px 1px #8a8a8a, 0 0 0 1px #d0d0d0; }
.pv-split .inner + .inner { border-left: 1px solid #cfcfcf; }
.pv-search { width: 440px; height: 44px; flex: none; display: flex; align-items: center; justify-content: center; gap: 10px; border-radius: 8px 0 0 8px; background: linear-gradient(#fafafa, #ededed); box-shadow: 0 1px 1px #8a8a8a, 0 0 0 1px #d0d0d0; color: #bcbcbc; font-size: 24px; }
.lens { width: 24px; height: 27px; display: block; }
.pv-title { position: absolute; left: 520px; top: -19px; display: flex; align-items: center; gap: 12px; font-family: "Liberation Sans", sans-serif; font-size: 26px; line-height: 30px; color: #333; white-space: nowrap; }
.pv-fileicon { width: 20px; height: 30px; background: #fff; border: 1px solid #aaa; display: block; }
.light { position: absolute; top: -17px; width: 22px; height: 22px; border-radius: 50%; }
.light.red { left: 16px; background: #fc4a46; }
.light.amber { left: 56px; background: #fdb024; }
.light.green { left: 97px; background: #2ac532; }
.pv-band { height: 34px; flex: none; background: #d5d5d5; }
.pv-canvas { height: 1351px; flex: none; background: #fff; overflow: hidden; }
.diagram { width: 1260px; height: 1351px; display: block; }
.band { fill: #efefef; }
.frame { fill: none; stroke: #444; stroke-width: 2.5; }
.box { fill: #fff; stroke: #111; stroke-width: 3; }
.solid { fill: none; stroke: #111; stroke-width: 3; }
.dash { fill: none; stroke: #111; stroke-width: 3; stroke-dasharray: 14 10; }
.dash.thin { stroke-width: 2.5; }
.dash.legend { stroke-dasharray: 16 12; stroke-width: 2.5; }
.handle { fill: #fff; stroke: #8a8a8a; stroke-width: 1.5; }
.rg { font-family: "Liberation Sans", sans-serif; font-size: 33.500px; fill: #111; }
.bd { font-family: "Liberation Sans", sans-serif; font-size: 33.500px; font-weight: 700; fill: #0a0a0a; }
.mid { text-anchor: middle; }
.pv-foot { flex: 1; background: linear-gradient(#d6d6d6, #c8c8c8); border-radius: 0 0 0 16px; }
```
